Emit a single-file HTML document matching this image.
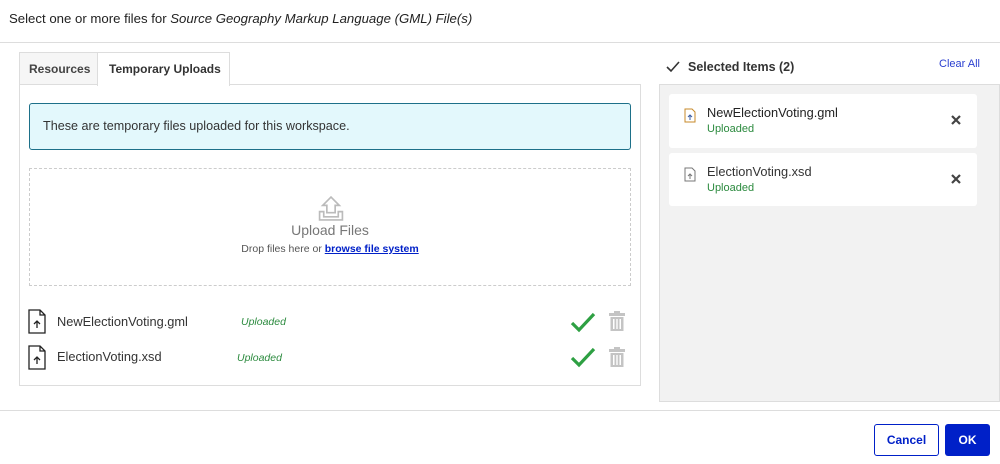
<!DOCTYPE html>
<html><head><style>
*{box-sizing:border-box;margin:0;padding:0}
body{width:1000px;height:464px;background:#fff;font-family:"Liberation Sans",sans-serif;color:#333;position:relative;overflow:hidden}
.a{position:absolute}
</style></head><body>
<div class="a" style="left:9px;top:11px;font-size:13.2px;color:#222">Select one or more files for <i>Source Geography Markup Language (GML) File(s)</i></div>
<div class="a" style="left:0;top:42px;width:1000px;height:1px;background:#ddd"></div>

<div class="a" style="left:19px;top:52px;width:79px;height:33px;border:1px solid #ddd;background:#f6f6f6;font-size:12px;font-weight:bold;color:#444;padding:9px 0 0 9px">Resources</div>
<div class="a" style="left:97px;top:52px;width:133px;height:34px;border:1px solid #ddd;border-bottom:none;background:#fff;font-size:12px;font-weight:bold;color:#333;padding:9px 0 0 11px;z-index:2">Temporary Uploads</div>
<div class="a" style="left:19px;top:84px;width:622px;height:302px;border:1px solid #ddd"></div>

<div class="a" style="left:29px;top:103px;width:602px;height:47px;border:1px solid #1d7089;border-radius:3px;background:#e3f8fc;font-size:12.6px;color:#333;padding:15px 0 0 13px">These are temporary files uploaded for this workspace.</div>

<div class="a" style="left:29px;top:168px;width:602px;height:118px;border:1px dashed #ccc"></div>
<svg class="a" style="left:317px;top:195px" width="28" height="27" viewBox="0 0 26 26" fill="none" stroke="#bbb" stroke-width="1.6"><path d="M13 2 L5 10 H9 V17 H17 V10 H21 Z"/><path d="M2 16 V24 H24 V16 H20 V21 H6 V16 Z"/></svg>
<div class="a" style="left:0;top:222px;width:660px;text-align:center;font-size:14px;color:#777">Upload Files</div>
<div class="a" style="left:0;top:243px;width:660px;text-align:center;font-size:10.5px;color:#555">Drop files here or <b style="color:#0020c8;text-decoration:underline">browse file system</b></div>

<svg class="a" style="left:27px;top:309px" width="20" height="25" viewBox="0 0 20 25" fill="none" stroke="#222" stroke-width="1.3"><path d="M2 1 H13 L18 6 V24 H2 Z M13 1 V6 H18"/><path d="M10 19 V12 M7 15 L10 12 L13 15"/></svg>
<div class="a" style="left:57px;top:314px;font-size:12.8px;color:#333">NewElectionVoting.gml</div>
<div class="a" style="left:241px;top:316px;font-size:10.5px;font-style:italic;color:#2b8a3e">Uploaded</div>
<svg class="a" style="left:27px;top:345px" width="20" height="25" viewBox="0 0 20 25" fill="none" stroke="#222" stroke-width="1.3"><path d="M2 1 H13 L18 6 V24 H2 Z M13 1 V6 H18"/><path d="M10 19 V12 M7 15 L10 12 L13 15"/></svg>
<div class="a" style="left:57px;top:349px;font-size:12.8px;color:#333">ElectionVoting.xsd</div>
<div class="a" style="left:237px;top:352px;font-size:10.5px;font-style:italic;color:#2b8a3e">Uploaded</div>
<svg class="a" style="left:570px;top:311px" width="26" height="22" viewBox="0 0 26 22"><path d="M2 12 L9 19 L24 3" fill="none" stroke="#2ea043" stroke-width="3.2"/></svg>
<svg class="a" style="left:570px;top:346px" width="26" height="22" viewBox="0 0 26 22"><path d="M2 12 L9 19 L24 3" fill="none" stroke="#2ea043" stroke-width="3.2"/></svg>
<svg class="a" style="left:608px;top:311px" width="18" height="20" viewBox="0 0 18 20" fill="#c4c4c4"><rect x="1" y="2" width="16" height="3"/><rect x="6" y="0" width="6" height="3"/><path d="M2.5 6 H15.5 V20 H2.5 Z M5 8 V18 H6.5 V8 Z M8.3 8 V18 H9.7 V8 Z M11.5 8 V18 H13 V8 Z" fill-rule="evenodd"/></svg>
<svg class="a" style="left:608px;top:347px" width="18" height="20" viewBox="0 0 18 20" fill="#c4c4c4"><rect x="1" y="2" width="16" height="3"/><rect x="6" y="0" width="6" height="3"/><path d="M2.5 6 H15.5 V20 H2.5 Z M5 8 V18 H6.5 V8 Z M8.3 8 V18 H9.7 V8 Z M11.5 8 V18 H13 V8 Z" fill-rule="evenodd"/></svg>

<svg class="a" style="left:666px;top:61px" width="14" height="12" viewBox="0 0 14 12"><path d="M1 6 L5 10 L13 1" fill="none" stroke="#333" stroke-width="1.6"/></svg>
<div class="a" style="left:688px;top:60px;font-size:12.5px;font-weight:bold;color:#333">Selected Items (2)</div>
<div class="a" style="left:939px;top:58px;font-size:11px;color:#2a3fd0">Clear All</div>
<div class="a" style="left:659px;top:84px;width:341px;height:318px;background:#f2f2f2;border:1px solid #ddd"></div>
<div class="a" style="left:669px;top:94px;width:308px;height:54px;background:#fff;border-radius:3px"></div>
<div class="a" style="left:669px;top:153px;width:308px;height:53px;background:#fff;border-radius:3px"></div>
<svg class="a" style="left:684px;top:108px" width="12" height="15" viewBox="0 0 12 15" fill="none" stroke="#c78a2a" stroke-width="1"><path d="M1 1 H8 L11 4 V14 H1 Z"/><path d="M6 12 V7 M4 9 L6 7 L8 9" stroke="#3a5ba0"/></svg>
<svg class="a" style="left:684px;top:167px" width="12" height="15" viewBox="0 0 12 15" fill="none" stroke="#777" stroke-width="1"><path d="M1 1 H8 L11 4 V14 H1 Z"/><path d="M6 12 V7 M4 9 L6 7 L8 9"/></svg>
<div class="a" style="left:707px;top:105px;font-size:12.8px;color:#222">NewElectionVoting.gml</div>
<div class="a" style="left:707px;top:123px;font-size:11px;color:#2b8a3e">Uploaded</div>
<div class="a" style="left:707px;top:164px;font-size:12.8px;color:#333">ElectionVoting.xsd</div>
<div class="a" style="left:707px;top:182px;font-size:11px;color:#2b8a3e">Uploaded</div>
<svg class="a" style="left:951px;top:115px" width="10" height="10" viewBox="0 0 10 10"><path d="M1 1 L9 9 M9 1 L1 9" stroke="#444" stroke-width="2.2"/></svg>
<svg class="a" style="left:951px;top:174px" width="10" height="10" viewBox="0 0 10 10"><path d="M1 1 L9 9 M9 1 L1 9" stroke="#444" stroke-width="2.2"/></svg>

<div class="a" style="left:0;top:410px;width:1000px;height:1px;background:#ddd"></div>
<div class="a" style="left:874px;top:424px;width:65px;height:32px;border:1px solid #0020c8;border-radius:3px;color:#0020c8;font-size:12px;font-weight:bold;text-align:center;line-height:30px">Cancel</div>
<div class="a" style="left:945px;top:424px;width:45px;height:32px;background:#0020c8;border-radius:3px;color:#fff;font-size:12px;font-weight:bold;text-align:center;line-height:32px">OK</div>
</body></html>
